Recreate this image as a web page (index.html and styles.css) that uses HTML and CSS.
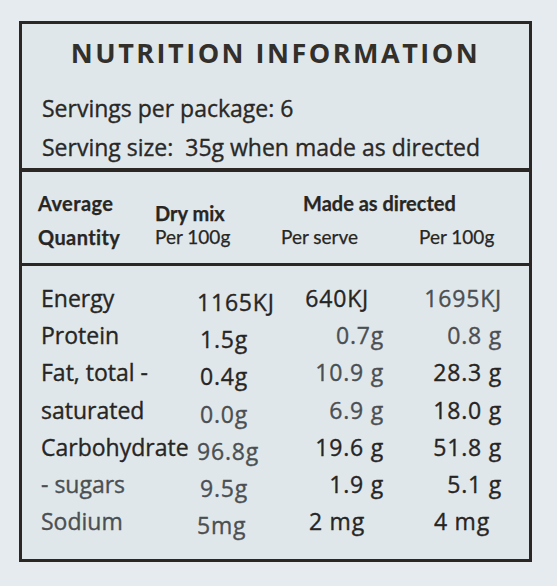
FILE: index.html
```html
<!DOCTYPE html>
<html lang="en">
<head>
<meta charset="utf-8">
<title>Nutrition Information</title>
<link rel="stylesheet" href="styles.css">
</head>
<body>
<div class="label">
  <section class="top">
    <h1 class="title">NUTRITION INFORMATION</h1>
    <p class="serv">Servings per package: 6</p>
    <p class="serv">Serving size:&nbsp;&nbsp;35g when made as directed</p>
  </section>
  <section class="head">
    <div class="h-label">Average</div>
    <div class="h-dry"><b>Dry mix</b><span>Per 100g</span></div>
    <div class="h-made">Made as directed</div>
    <div class="h-label">Quantity</div>
    <div class="h-sub">Per serve</div>
    <div class="h-sub">Per 100g</div>
  </section>
  <section class="data">
    <div class="name">Energy</div><div class="dry">1165KJ</div><div class="v3 pr15">640KJ</div><div class="v4 soft">1695KJ</div>
    <div class="name">Protein</div><div class="dry in3">1.5g</div><div class="v3 soft">0.7g</div><div class="v4 soft">0.8 g</div>
    <div class="name">Fat, total -</div><div class="dry in3">0.4g</div><div class="v3 soft">10.9 g</div><div class="v4">28.3 g</div>
    <div class="name">saturated</div><div class="dry in3 soft">0.0g</div><div class="v3 soft">6.9 g</div><div class="v4">18.0 g</div>
    <div class="name">Carbohydrate</div><div class="dry soft">96.8g</div><div class="v3">19.6 g</div><div class="v4">51.8 g</div>
    <div class="name soft">- sugars</div><div class="dry in3 soft">9.5g</div><div class="v3">1.9 g</div><div class="v4">5.1 g</div>
    <div class="name soft">Sodium</div><div class="dry soft">5mg</div><div class="v3 pr19">2 mg</div><div class="v4 pr12">4 mg</div>
  </section>
</div>
</body>
</html>
```
FILE: styles.css
```css
html, body {
  margin: 0;
  padding: 0;
}
body {
  background: #e5ebee;
  color: #272523;
  font-family: "Open Sans", "Noto Sans", sans-serif;
  width: 557px;
  height: 586px;
  overflow: hidden;
}
.label {
  margin: 21px 0 0 19px;
  width: 513px;
  height: 541px;
  box-sizing: border-box;
  border: 3px solid #2b2724;
  background: #dfe7eb;
  display: flex;
  flex-direction: column;
}
.top {
  height: 148px;
  box-sizing: border-box;
  padding: 14px 0 0 20px;
  border-bottom: 4px solid #2b2724;
}
.title {
  margin: 0 0 21px -20px;
  font-size: 27px;
  line-height: 30px;
  font-weight: 700;
  letter-spacing: 2.5px;
  text-align: center;
  color: #33302c;
}
.serv {
  margin: 0;
  font-size: 23px;
  line-height: 39px;
  color: #2a2826;
  -webkit-text-stroke: 0.35px currentColor;
}
.head {
  height: 94px;
  box-sizing: border-box;
  padding: 14px 0 0 16px;
  border-bottom: 3px solid #2b2724;
  display: grid;
  grid-template-columns: 117px 126px 138px 1fr;
  grid-template-rows: 34px 34px;
  font-family: Lato, "Open Sans", sans-serif;
  font-size: 19px;
  line-height: 34px;
  color: #282623;
  -webkit-text-stroke: 0.25px currentColor;
}
.h-label {
  font-size: 20px;
  font-weight: 700;
  letter-spacing: 0.4px;
}
.h-dry {
  grid-column: 2;
  grid-row: 1 / span 2;
  padding-top: 16px;
  display: flex;
  flex-direction: column;
  line-height: 23px;
}
.h-dry b {
  font-size: 20px;
  font-weight: 700;
}
.h-made {
  grid-column: 3 / span 2;
  grid-row: 1;
  padding-left: 22px;
  font-size: 20px;
  font-weight: 700;
}
.data {
  flex: 1;
  padding: 14px 0 0 19px;
  display: grid;
  grid-template-columns: 156px 100px 87px 118px;
  grid-auto-rows: 37.2px;
  align-content: start;
  font-size: 23px;
  line-height: 37px;
  -webkit-text-stroke: 0.35px currentColor;
}
.name {
  white-space: nowrap;
}
.dry, .v3, .v4 {
  letter-spacing: 0.8px;
  white-space: nowrap;
}
.dry {
  padding-top: 8px;
  line-height: 29px;
}
.in3 {
  padding-left: 3px;
}
.v3, .v4 {
  text-align: right;
}
.pr15 { padding-right: 15px; }
.pr19 { padding-right: 19px; }
.pr12 { padding-right: 12px; }
.soft {
  color: #4b4f52;
}
```
